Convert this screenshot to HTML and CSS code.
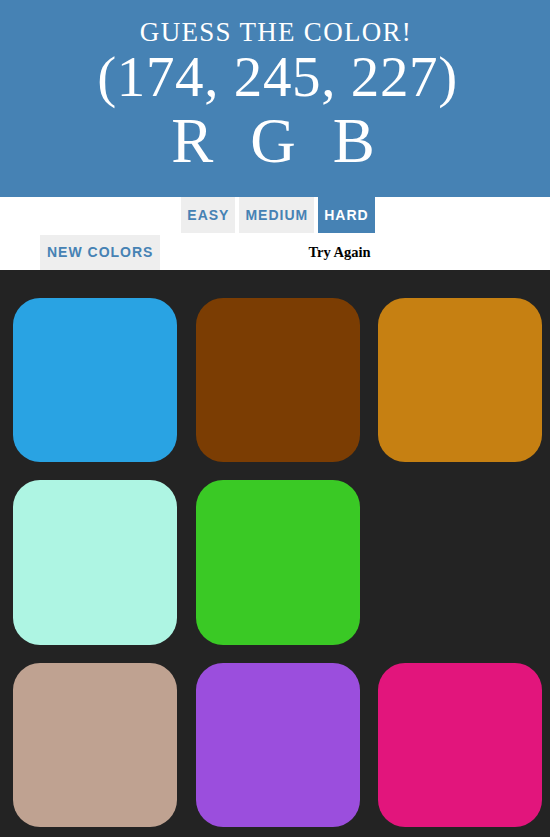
FILE: index.html
```html
<!DOCTYPE html>
<html lang="en">
<head>
<meta charset="utf-8">
<title>Color Game</title>
<link rel="stylesheet" href="styles.css">
</head>
<body>
  <header class="header">
    <div class="title">GUESS THE COLOR!</div>
    <div class="rgb-value">(174, 245, 227)</div>
    <div class="rgb-letters"><span>R</span><span>G</span><span>B</span></div>
  </header>
  <nav class="stripe">
    <div class="modes">
      <button class="btn">Easy</button>
      <button class="btn">Medium</button>
      <button class="btn selected">Hard</button>
    </div>
    <div class="actions">
      <button class="btn">New Colors</button>
      <span class="message">Try Again</span>
    </div>
  </nav>
  <main class="board">
    <div class="square c1"></div>
    <div class="square c2"></div>
    <div class="square c3"></div>
    <div class="square c4"></div>
    <div class="square c5"></div>
    <div class="square empty"></div>
    <div class="square c7"></div>
    <div class="square c8"></div>
    <div class="square c9"></div>
  </main>
</body>
</html>
```
FILE: styles.css
```css
html, body {
  margin: 0;
  padding: 0;
  height: 100%;
}
body {
  font-family: "Liberation Serif", "Times New Roman", serif;
  background: #232323;
  display: flex;
  flex-direction: column;
}
.header {
  background: #4682b4;
  color: #fff;
  text-align: center;
  height: 197px;
  box-sizing: border-box;
  padding-top: 17px;
}
.title {
  font-size: 27px;
  line-height: 30px;
  letter-spacing: 1.3px;
  padding-left: 2px;
}
.rgb-value {
  font-size: 57px;
  line-height: 60px;
  letter-spacing: 0.6px;
  padding-left: 5px;
}
.rgb-letters {
  font-size: 63px;
  line-height: 68px;
  display: flex;
  justify-content: center;
  gap: 37px;
  padding-right: 4px;
}
.stripe {
  background: #fff;
  height: 73px;
}
.modes {
  display: flex;
  justify-content: center;
  gap: 4px;
  padding-left: 6px;
  height: 36px;
}
.btn {
  font-family: "Liberation Sans", Arial, sans-serif;
  font-weight: bold;
  font-size: 14px;
  letter-spacing: 1px;
  text-transform: uppercase;
  color: #4682b4;
  background: #eeeeee;
  border: none;
  padding: 0 6px;
  height: 36px;
  margin: 0;
}
.btn.selected {
  background: #4682b4;
  color: #fff;
}
.actions {
  display: flex;
  align-items: center;
  height: 36px;
  padding-left: 40px;
  margin-top: 1px;
}
.actions .btn {
  padding: 0 7px;
  height: 35px;
}
.message {
  font-weight: bold;
  font-size: 14.5px;
  color: #000;
  margin-left: 148px;
}
.board {
  flex: 1;
  display: grid;
  grid-template-columns: repeat(3, 164px);
  grid-auto-rows: 164.5px;
  column-gap: 18.5px;
  row-gap: 18px;
  padding: 27.5px 0 0 13px;
  align-content: start;
}
.square {
  border-radius: 27px;
}
.square.empty { background: transparent; }
.c1 { background: #29a3e3; }
.c2 { background: #7b3d03; }
.c3 { background: #c68012; }
.c4 { background: #aef5e3; }
.c5 { background: #3ac925; }
.c7 { background: #bfa291; }
.c8 { background: #9b4edd; }
.c9 { background: #e2157c; }
```
